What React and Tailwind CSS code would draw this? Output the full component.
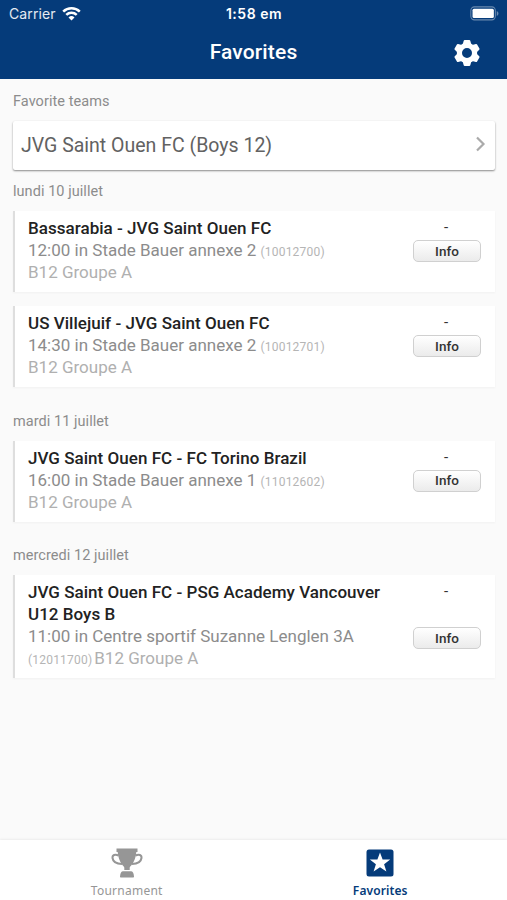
import clsx from "clsx";

const days = [
  {
    date: "lundi 10 juillet",
    matches: [
      {
        id: "10012700",
        teams: "Bassarabia - JVG Saint Ouen FC",
        place: "12:00 in Stade Bauer annexe 2",
        group: "B12 Groupe A",
      },
      {
        id: "10012701",
        teams: "US Villejuif - JVG Saint Ouen FC",
        place: "14:30 in Stade Bauer annexe 2",
        group: "B12 Groupe A",
      },
    ],
  },
  {
    date: "mardi 11 juillet",
    matches: [
      {
        id: "11012602",
        teams: "JVG Saint Ouen FC - FC Torino Brazil",
        place: "16:00 in Stade Bauer annexe 1",
        group: "B12 Groupe A",
      },
    ],
  },
  {
    date: "mercredi 12 juillet",
    matches: [
      {
        id: "12011700",
        teams: "JVG Saint Ouen FC - PSG Academy Vancouver U12 Boys B",
        place: "11:00 in Centre sportif Suzanne Lenglen 3A",
        group: "B12 Groupe A",
        long: true,
      },
    ],
  },
];

const StatusBar = () => (
  <div className="grid h-[28px] grid-cols-3 items-center pl-[9px] pr-[8px] font-['Inter',sans-serif] text-[14px] leading-4 text-white">
    <div className="flex items-center gap-[6px]">
      <span className="tracking-[0.1px] text-white/90">Carrier</span>
      <svg className="-mt-[2px]" width="19" height="15" viewBox="0 0 19 15" fill="none" stroke="currentColor" strokeWidth="2.5">
        <path d="M1.2 5.6a11.8 11.8 0 0 1 16.6 0" />
        <path d="M4.3 8.8a7.4 7.4 0 0 1 10.4 0" />
        <path d="M9.5 14.4 6.5 11.4a4.3 4.3 0 0 1 6 0z" fill="currentColor" stroke="none" />
      </svg>
    </div>
    <span className="text-center font-semibold tracking-[0.5px]">1:58 em</span>
    <svg className="-mt-[2px] justify-self-end" width="29" height="15" viewBox="0 0 31 15" preserveAspectRatio="none">
      <rect x="0.9" y="0.9" width="26.2" height="13" rx="3.8" fill="none" stroke="#fff" strokeOpacity="0.4" strokeWidth="1.1" />
      <rect x="2.7" y="2.8" width="22.8" height="9.2" rx="1.5" fill="#fff" />
      <path d="M28.6 5v5c1.1-.5 1.8-1.4 1.8-2.5S29.7 5.5 28.6 5z" fill="#fff" fillOpacity="0.4" />
    </svg>
  </div>
);

const GearIcon = () => (
  <svg width="28" height="28" viewBox="-14 -14 28 28" fill="currentColor">
    <circle r="7.6" fill="none" stroke="currentColor" strokeWidth="5.2" />
    {[0, 60, 120, 180, 240, 300].map((angle) => (
      <path key={angle} transform={`rotate(${angle})`} d="M-4.6-7.5-3.3-12.2q.2-.8 1-.8h4.600q.8 0 1 .8L4.600-7.500z" />
    ))}
  </svg>
);

const MatchCard = ({ match }) => (
  <div className="flex border-l-2 border-[#dedede] bg-white pb-[9px] pl-[13px] pr-[14px] pt-[6px] shadow-[0_1px_2px_rgba(0,0,0,0.04)]">
    <div className="w-[372px] text-[17px] leading-[22px]">
      <p className="font-medium tracking-[0.03px] text-[#222]">{match.teams}</p>
      <p className="text-[#8c8c8c]">
        {match.place}{" "}
        <span className="text-[12px] leading-none tracking-[0.2px] text-[#b5b5b5]">({match.id})</span>
        {!match.long && <br />}
        <span className={clsx("text-[#b0b0b0]", match.long && "ml-[2px]")}>{match.group}</span>
      </p>
    </div>
    <div className="ml-auto flex w-[68px] flex-col items-center">
      <span className="mr-[2px] text-[15px] leading-[20px] text-[#333]">-</span>
      <button
        className={clsx(
          "h-[22px] w-[68px] rounded-[5px] border border-[#d0d0d0] bg-linear-to-b from-white to-[#ebebeb] pt-px text-[13.5px] font-medium leading-none text-[#333]",
          match.long ? "mt-[26px]" : "mt-[3px]"
        )}
      >
        Info
      </button>
    </div>
  </div>
);

const App = () => {
  return (
    <div className="flex h-[900px] w-[507px] flex-col overflow-hidden bg-[#fafafa] font-['Roboto',sans-serif]">
      <header className="h-[79px] bg-[#053b7a]">
        <StatusBar />
        <div className="grid h-[49px] grid-cols-[60px_1fr_60px] items-center pr-[6px] pl-[6px]">
          <h1 className="col-start-2 text-center text-[21px] font-medium tracking-[0.15px] text-white">Favorites</h1>
          <button className="ml-[12px] text-white" aria-label="Settings">
            <GearIcon />
          </button>
        </div>
      </header>

      <main className="flex-1 pl-[13px] pr-[12px] pt-[13px]">
        <h2 className="text-[14.5px] leading-[20px] tracking-[0.05px] text-[#8c8c8c]">Favorite teams</h2>
        <div className="mt-[9px] flex h-[49px] items-center justify-between rounded-[2px] bg-white pl-[8px] pr-[9px] shadow-[0_1px_2px_rgba(0,0,0,0.45)]">
          <span className="text-[19.5px] text-[#626262]">JVG Saint Ouen FC (Boys 12)</span>
          <svg className="-mt-[3px]" width="11" height="16" viewBox="0 0 11 16" fill="none" stroke="#aaa" strokeWidth="2.2">
            <path d="M2 1.5 8.5 8 2 14.5" />
          </svg>
        </div>

        {days.map((day, i) => (
          <section key={day.date} className={i === 0 ? "mt-[12px]" : "mt-[24.5px]"}>
            <h2 className="mb-[9px] text-[14.5px] leading-[20px] tracking-[0.05px] text-[#8c8c8c]">{day.date}</h2>
            <div className="flex flex-col gap-[14px]">
              {day.matches.map((match) => (
                <MatchCard key={match.id} match={match} />
              ))}
            </div>
          </section>
        ))}
      </main>

      {/* Bottom tabs */}
      <nav className="grid h-[60px] grid-cols-2 bg-white font-['Noto_Sans',sans-serif] text-[12px] shadow-[0_-1px_2px_rgba(0,0,0,0.06)]">
        <div className="flex flex-col items-center pt-[8px] text-[#969696]">
          <svg width="32" height="31" viewBox="0 0 32 31" fill="currentColor">
            <path d="M5.5.5h21V4h-1.200c-.3 5-1.800 9-4.300 12.500-1 1.500-2.300 2.200-2.300 3.200V22h-5.400v-2.300c0-1-1.300-1.700-2.300-3.200C8.500 13 7 9 6.700 4H5.500z" />
            <path d="M7.500 7.500C4 5.800 1.200 7 1.500 10c.5 3.800 4.500 5.800 9.500 6M24.500 7.500c3.500-1.700 6.300-.5 6 2.500-.5 3.800-4.500 5.800-9.500 6" fill="none" stroke="currentColor" strokeWidth="2" />
            <path d="M12 23.300h8c1.700 0 2.600 1.500 3 5.200 0 .6-.4 1-1 1H10c-.6 0-1-.4-1-1 .4-3.700 1.300-5.200 3-5.200z" />
          </svg>
          <span className="mt-[4px] leading-[16px] tracking-[0.25px]">Tournament</span>
        </div>
        <div className="flex flex-col items-center pt-[9px] text-[#053b7a]">
          <svg width="28" height="28" viewBox="0 0 28 28">
            <rect x="0.5" y="0.5" width="27" height="27" rx="2.5" fill="currentColor" />
            <path d="m14 3.6 2.6 7h7.6l-6.1 4.6 2.3 7.4L14 18.2l-6.4 4.4 2.3-7.4-6.1-4.6h7.6z" fill="#fff" />
          </svg>
          <span className="mt-[6px] font-semibold leading-[16px] tracking-[0.1px]">Favorites</span>
        </div>
      </nav>
    </div>
  );
};

export default App;
